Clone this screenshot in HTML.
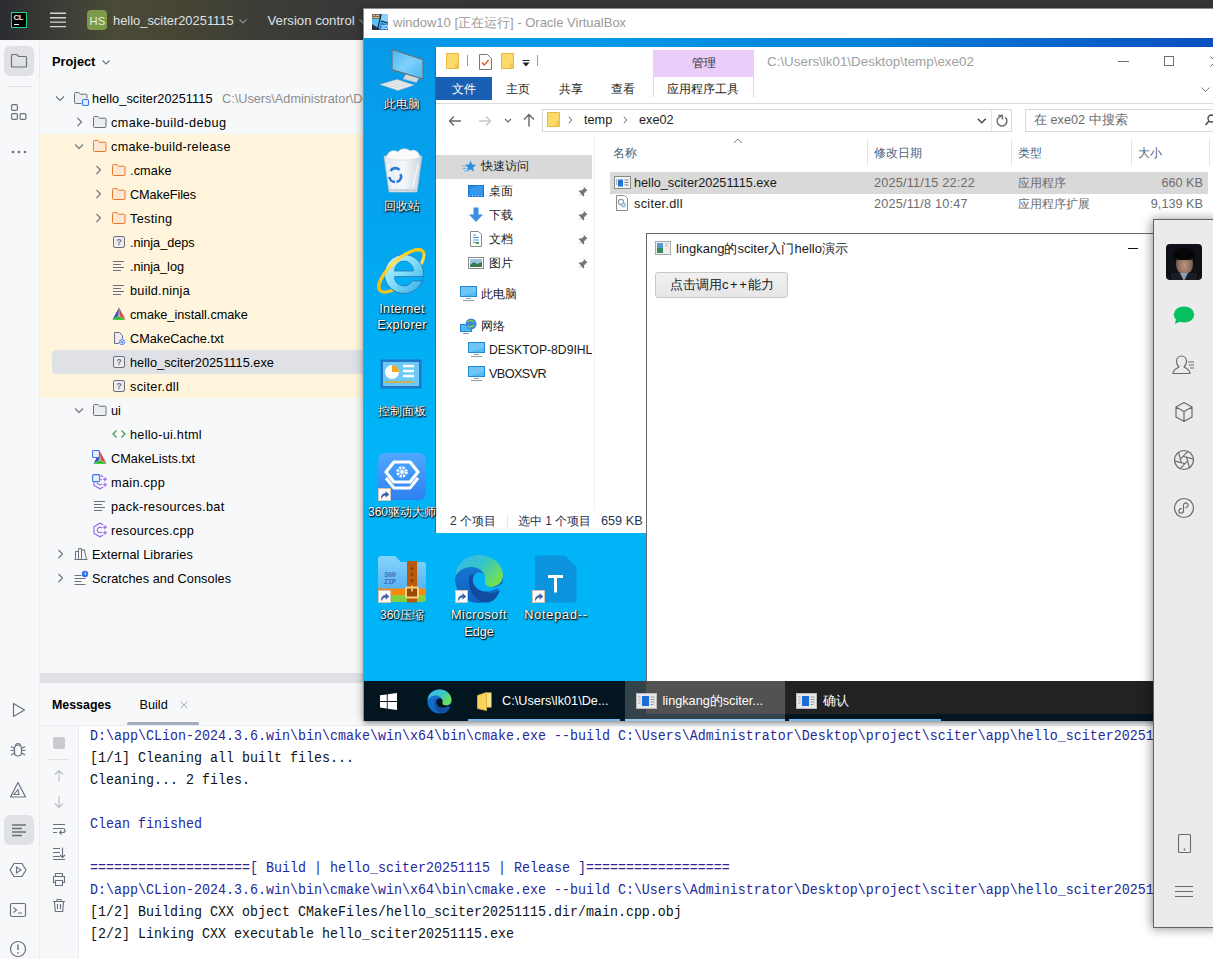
<!DOCTYPE html>
<html><head><meta charset="utf-8">
<style>
*{box-sizing:border-box;margin:0;padding:0}
html,body{width:1213px;height:959px;overflow:hidden;background:#f7f8fa;font-family:"Liberation Sans",sans-serif;position:relative}
.a{position:absolute;display:block}
.t{position:absolute;white-space:nowrap;line-height:14px}
.tr{font-size:12.7px;color:#000}
.cl{position:absolute;left:90px;font-family:"Liberation Mono",monospace;font-size:13.33px;line-height:22px;white-space:pre;color:#111;transform-origin:0 0;transform:scaleY(1.13)}
.cl.b{color:#27279a}
.w{color:#fff}
</style></head><body>
<div class="a" style="left:0;top:0;width:1213px;height:40px;background:linear-gradient(90deg,#2b2d32 0px,#3b3c35 55px,#4a4a37 115px,#474635 170px,#3d3d37 260px,#383837 340px,#353535 700px)"></div>
<div class="a" style="left:11px;top:12px;width:16px;height:16px;background:#000;border:1px solid #21d789"></div>
<div class="t" style="left:13.5px;top:11px;font-size:7.8px;font-weight:bold;color:#eee;letter-spacing:-0.4px">CL</div>
<div class="a" style="left:14px;top:23.8px;width:5px;height:1.4px;background:#fff"></div>
<svg class="a" style="left:49px;top:11px" width="18" height="18" viewBox="0 0 18 18"><path d="M1 2.25h16M1 6.7h16M1 11.15h16M1 15.6h16" stroke="#d5d5d5" stroke-width="1.4"/></svg>
<div class="a" style="left:87px;top:10px;width:20px;height:20px;border-radius:4px;background:#7b9a4a"></div>
<div class="t" style="left:89.5px;top:13.5px;font-size:11.2px;color:#e8eedd;letter-spacing:0.2px">HS</div>
<div class="t" style="left:113px;top:14px;font-size:12.9px;color:#dfe1e5">hello_sciter20251115</div>
<svg class="a" style="left:237px;top:15px" width="12" height="12" viewBox="0 0 12 12"><path d="M2.5 4.5l3.5 3.5 3.5-3.5" fill="none" stroke="#8c8f94" stroke-width="1.1"/></svg>
<div class="t" style="left:267.5px;top:14px;font-size:13.2px;color:#dfe1e5">Version control</div>
<svg class="a" style="left:357px;top:15px" width="12" height="12" viewBox="0 0 12 12"><path d="M2.5 4.5l3.5 3.5 3.5-3.5" fill="none" stroke="#8c8f94" stroke-width="1.1"/></svg>
<div class="a" style="left:0;top:40px;width:40px;height:919px;background:#f7f8fa;border-right:1px solid #ebecf0"></div>
<div class="a" style="left:4px;top:46px;width:30px;height:30px;border-radius:6px;background:#dfe1e5"></div>
<svg class="a" style="left:9px;top:51px" width="20" height="20" viewBox="0 0 20 20"><path d="M2.5 4.5a1 1 0 0 1 1-1h4.2l2 2h6.8a1 1 0 0 1 1 1v8.5a1 1 0 0 1-1 1h-13a1 1 0 0 1-1-1z" fill="none" stroke="#6c707e" stroke-width="1.2"/></svg>
<div class="a" style="left:7px;top:86px;width:24px;height:1px;background:#dfe1e5"></div>
<svg class="a" style="left:9px;top:104px" width="20" height="20" viewBox="0 0 20 20"><rect x="2.6" y="0.6" width="5.8" height="5.8" rx="1.2" fill="none" stroke="#6c707e" stroke-width="1.2"/><rect x="2.6" y="9.6" width="5.8" height="5.8" rx="1.2" fill="none" stroke="#6c707e" stroke-width="1.2"/><rect x="11.1" y="9.6" width="5.8" height="5.8" rx="1.2" fill="none" stroke="#6c707e" stroke-width="1.2"/></svg>
<svg class="a" style="left:9px;top:149px" width="20" height="6" viewBox="0 0 20 6"><circle cx="4" cy="3" r="1.3" fill="#6c707e"/><circle cx="10" cy="3" r="1.3" fill="#6c707e"/><circle cx="16" cy="3" r="1.3" fill="#6c707e"/></svg>
<svg class="a" style="left:8px;top:700px" width="20" height="20" viewBox="0 0 20 20"><path d="M5.5 3.5v13l11-6.5z" fill="none" stroke="#6c707e" stroke-width="1.2" stroke-linejoin="round"/></svg>
<svg class="a" style="left:8px;top:740px" width="20" height="20" viewBox="0 0 20 20"><path d="M6.5 8.5a3.5 3.5 0 0 1 7 0v4a3.5 3.5 0 0 1-7 0z" fill="none" stroke="#6c707e" stroke-width="1.2"/><path d="M7.5 6a2.5 2.5 0 0 1 5 0" fill="none" stroke="#6c707e" stroke-width="1.2"/><path d="M2.5 10.5h4M13.5 10.5h4M3 6.5l3.5 2M17 6.5l-3.5 2M3 15l3.5-2M17 15l-3.5-2" stroke="#6c707e" stroke-width="1.2"/></svg>
<svg class="a" style="left:8px;top:780px" width="20" height="20" viewBox="0 0 20 20"><path d="M10 2.5L2.5 17h15z" fill="none" stroke="#6c707e" stroke-width="1.2" stroke-linejoin="round"/><path d="M10 9.5l-4 5h5z" fill="none" stroke="#6c707e" stroke-width="1.1"/></svg>
<div class="a" style="left:4px;top:815px;width:30px;height:30px;border-radius:6px;background:#dfe1e5"></div>
<svg class="a" style="left:9px;top:820px" width="20" height="20" viewBox="0 0 20 20"><path d="M3 5h14M3 8.5h10M3 12h14M3 15.5h10" stroke="#6c707e" stroke-width="1.3"/></svg>
<svg class="a" style="left:8px;top:860px" width="20" height="20" viewBox="0 0 20 20"><path d="M6 3.5h8l4 6.5-4 6.5h-8l-4-6.5z" fill="none" stroke="#6c707e" stroke-width="1.2" stroke-linejoin="round"/><path d="M8.5 7v6l4.5-3z" fill="none" stroke="#6c707e" stroke-width="1.1"/></svg>
<svg class="a" style="left:8px;top:900px" width="20" height="20" viewBox="0 0 20 20"><rect x="2.5" y="3.5" width="15" height="13" rx="1.5" fill="none" stroke="#6c707e" stroke-width="1.2"/><path d="M5.5 7.5l3 2.5-3 2.5M10 13h4" fill="none" stroke="#6c707e" stroke-width="1.2"/></svg>
<svg class="a" style="left:8px;top:939px" width="20" height="20" viewBox="0 0 20 20"><circle cx="10" cy="10" r="7.5" fill="none" stroke="#6c707e" stroke-width="1.2"/><path d="M10 5.5v5.5" stroke="#6c707e" stroke-width="1.4"/><circle cx="10" cy="13.8" r="0.9" fill="#6c707e"/></svg>
<div class="t" style="left:52px;top:55px;font-size:12.8px;font-weight:bold;color:#000">Project</div>
<svg class="a" style="left:100px;top:56px" width="12" height="12" viewBox="0 0 12 12"><path d="M2.5 4.5l3.5 3.5 3.5-3.5" fill="none" stroke="#6c707e" stroke-width="1.1"/></svg>
<div class="a" style="left:40px;top:134px;width:1173px;height:264px;background:#fef5dc"></div>
<div class="a" style="left:52px;top:350px;width:1161px;height:24px;border-radius:4px;background:#dfe1e6"></div>
<svg class="a" style="left:52px;top:90px" width="16" height="16" viewBox="0 0 16 16"><path d="M4 6.5l4 4 4-4" fill="none" stroke="#6c707e" stroke-width="1.1"/></svg>
<svg class="a" style="left:73px;top:90px" width="18" height="18" viewBox="0 0 18 18"><path d="M1.5 3.5a1 1 0 0 1 1-1h3.3l1.7 1.7h5.5a1 1 0 0 1 1 1v7.3a1 1 0 0 1-1 1h-10.5a1 1 0 0 1-1-1z" fill="#ebecf0" stroke="#6c707e" stroke-width="1"/><rect x="8.5" y="8.5" width="8" height="8" rx="1.5" fill="#f7f8fa"/><rect x="9.5" y="9.5" width="6" height="6" rx="1.2" fill="#e7effd" stroke="#3574f0" stroke-width="1.1"/></svg>
<div class="t tr" style="left:92px;top:92px;letter-spacing:0.09px">hello_sciter20251115</div>
<svg class="a" style="left:71px;top:114px" width="16" height="16" viewBox="0 0 16 16"><path d="M6.5 4l4 4-4 4" fill="none" stroke="#6c707e" stroke-width="1.1"/></svg>
<svg class="a" style="left:92px;top:114px" width="16" height="16" viewBox="0 0 16 16"><path d="M1.5 3.5a1 1 0 0 1 1-1h3.3l1.7 1.7h5.5a1 1 0 0 1 1 1v7.3a1 1 0 0 1-1 1h-10.5a1 1 0 0 1-1-1z" fill="#ebecf0" stroke="#6c707e" stroke-width="1"/></svg>
<div class="t tr" style="left:111px;top:116px;letter-spacing:0.45px">cmake-build-debug</div>
<svg class="a" style="left:71px;top:138px" width="16" height="16" viewBox="0 0 16 16"><path d="M4 6.5l4 4 4-4" fill="none" stroke="#6c707e" stroke-width="1.1"/></svg>
<svg class="a" style="left:92px;top:138px" width="16" height="16" viewBox="0 0 16 16"><path d="M1.5 3.5a1 1 0 0 1 1-1h3.3l1.7 1.7h5.5a1 1 0 0 1 1 1v7.3a1 1 0 0 1-1 1h-10.5a1 1 0 0 1-1-1z" fill="#fde6d3" stroke="#e57b2e" stroke-width="1"/></svg>
<div class="t tr" style="left:111px;top:140px;letter-spacing:0.29px">cmake-build-release</div>
<svg class="a" style="left:90px;top:162px" width="16" height="16" viewBox="0 0 16 16"><path d="M6.5 4l4 4-4 4" fill="none" stroke="#6c707e" stroke-width="1.1"/></svg>
<svg class="a" style="left:111px;top:162px" width="16" height="16" viewBox="0 0 16 16"><path d="M1.5 3.5a1 1 0 0 1 1-1h3.3l1.7 1.7h5.5a1 1 0 0 1 1 1v7.3a1 1 0 0 1-1 1h-10.5a1 1 0 0 1-1-1z" fill="#fde6d3" stroke="#e57b2e" stroke-width="1"/></svg>
<div class="t tr" style="left:130px;top:164px;letter-spacing:0.12px">.cmake</div>
<svg class="a" style="left:90px;top:186px" width="16" height="16" viewBox="0 0 16 16"><path d="M6.5 4l4 4-4 4" fill="none" stroke="#6c707e" stroke-width="1.1"/></svg>
<svg class="a" style="left:111px;top:186px" width="16" height="16" viewBox="0 0 16 16"><path d="M1.5 3.5a1 1 0 0 1 1-1h3.3l1.7 1.7h5.5a1 1 0 0 1 1 1v7.3a1 1 0 0 1-1 1h-10.5a1 1 0 0 1-1-1z" fill="#fde6d3" stroke="#e57b2e" stroke-width="1"/></svg>
<div class="t tr" style="left:130px;top:188px;letter-spacing:-0.09px">CMakeFiles</div>
<svg class="a" style="left:90px;top:210px" width="16" height="16" viewBox="0 0 16 16"><path d="M6.5 4l4 4-4 4" fill="none" stroke="#6c707e" stroke-width="1.1"/></svg>
<svg class="a" style="left:111px;top:210px" width="16" height="16" viewBox="0 0 16 16"><path d="M1.5 3.5a1 1 0 0 1 1-1h3.3l1.7 1.7h5.5a1 1 0 0 1 1 1v7.3a1 1 0 0 1-1 1h-10.5a1 1 0 0 1-1-1z" fill="#fde6d3" stroke="#e57b2e" stroke-width="1"/></svg>
<div class="t tr" style="left:130px;top:212px;letter-spacing:0.33px">Testing</div>
<svg class="a" style="left:111px;top:234px" width="16" height="16" viewBox="0 0 16 16"><rect x="2.5" y="2.5" width="11" height="11" rx="1.5" fill="#ebecf0" stroke="#6c707e"/><text x="8" y="11.3" font-size="9" font-weight="bold" text-anchor="middle" fill="#6c707e" font-family="Liberation Sans">?</text></svg>
<div class="t tr" style="left:130px;top:236px;letter-spacing:-0.03px">.ninja_deps</div>
<svg class="a" style="left:111px;top:258px" width="16" height="16" viewBox="0 0 16 16"><path d="M2 3.5h11M2 6.5h8M2 9.5h11M2 12.5h8" stroke="#6c707e" stroke-width="1"/></svg>
<div class="t tr" style="left:130px;top:260px;letter-spacing:-0.04px">.ninja_log</div>
<svg class="a" style="left:111px;top:282px" width="16" height="16" viewBox="0 0 16 16"><path d="M2 3.5h11M2 6.5h8M2 9.5h11M2 12.5h8" stroke="#6c707e" stroke-width="1"/></svg>
<div class="t tr" style="left:130px;top:284px;letter-spacing:0.26px">build.ninja</div>
<svg class="a" style="left:111px;top:306px" width="16" height="16" viewBox="0 0 16 16"><path d="M8 1.5L1.5 14h13z" fill="#d6d6d6"/><path d="M8 1.5L1.6 13.5 7.2 10z" fill="#3b4fc4"/><path d="M8 1.5L14.4 13.5 8.6 10z" fill="#db4648"/><path d="M1.6 13.8L7.5 10.2 14.4 13.8z" fill="#22c21f"/></svg>
<div class="t tr" style="left:130px;top:308px;letter-spacing:0.0px">cmake_install.cmake</div>
<svg class="a" style="left:111px;top:330px" width="16" height="16" viewBox="0 0 16 16"><path d="M3.5 2.5h5l3 3v8h-8z" fill="#ebecf0" stroke="#6c707e"/><circle cx="11" cy="12" r="3.3" fill="#f7f8fa"/><circle cx="11" cy="12" r="2.4" fill="none" stroke="#3574f0" stroke-width="1.4" stroke-dasharray="1.3 0.6"/><circle cx="11" cy="12" r="0.9" fill="#3574f0"/></svg>
<div class="t tr" style="left:130px;top:332px;letter-spacing:0.0px">CMakeCache.txt</div>
<svg class="a" style="left:111px;top:354px" width="16" height="16" viewBox="0 0 16 16"><rect x="2.5" y="2.5" width="11" height="11" rx="1.5" fill="#ebecf0" stroke="#6c707e"/><text x="8" y="11.3" font-size="9" font-weight="bold" text-anchor="middle" fill="#6c707e" font-family="Liberation Sans">?</text></svg>
<div class="t tr" style="left:130px;top:356px;letter-spacing:0.05px">hello_sciter20251115.exe</div>
<svg class="a" style="left:111px;top:378px" width="16" height="16" viewBox="0 0 16 16"><rect x="2.5" y="2.5" width="11" height="11" rx="1.5" fill="#ebecf0" stroke="#6c707e"/><text x="8" y="11.3" font-size="9" font-weight="bold" text-anchor="middle" fill="#6c707e" font-family="Liberation Sans">?</text></svg>
<div class="t tr" style="left:130px;top:380px;letter-spacing:0.32px">sciter.dll</div>
<svg class="a" style="left:71px;top:402px" width="16" height="16" viewBox="0 0 16 16"><path d="M4 6.5l4 4 4-4" fill="none" stroke="#6c707e" stroke-width="1.1"/></svg>
<svg class="a" style="left:92px;top:402px" width="16" height="16" viewBox="0 0 16 16"><path d="M1.5 3.5a1 1 0 0 1 1-1h3.3l1.7 1.7h5.5a1 1 0 0 1 1 1v7.3a1 1 0 0 1-1 1h-10.5a1 1 0 0 1-1-1z" fill="#ebecf0" stroke="#6c707e" stroke-width="1"/></svg>
<div class="t tr" style="left:111px;top:404px;letter-spacing:0px">ui</div>
<svg class="a" style="left:111px;top:426px" width="16" height="16" viewBox="0 0 16 16"><path d="M5.5 4.5l-3.5 3.5 3.5 3.5M10.5 4.5l3.5 3.5-3.5 3.5" fill="none" stroke="#3a9c4a" stroke-width="1.2"/></svg>
<div class="t tr" style="left:130px;top:428px;letter-spacing:0.27px">hello-ui.html</div>
<svg class="a" style="left:92px;top:450px" width="16" height="16" viewBox="0 0 16 16"><path d="M8 1.5L1.5 14h13z" fill="#d6d6d6"/><path d="M8 1.5L1.6 13.5 7.2 10z" fill="#3b4fc4"/><path d="M8 1.5L14.4 13.5 8.6 10z" fill="#db4648"/><path d="M1.6 13.8L7.5 10.2 14.4 13.8z" fill="#22c21f"/><rect x="0.5" y="0.5" width="7" height="7" rx="1.2" fill="#e7effd" stroke="#3574f0" stroke-width="1.1"/></svg>
<div class="t tr" style="left:111px;top:452px;letter-spacing:0.07px">CMakeLists.txt</div>
<svg class="a" style="left:92px;top:474px" width="16" height="16" viewBox="0 0 16 16"><path d="M11.2 2.8L8 1.2 2 4.6v6.8L8 14.8l3.2-1.8" fill="none" stroke="#8f5ff0" stroke-width="1.1"/><path d="M9.9 6.1a2.7 2.7 0 1 0 0 3.8" fill="none" stroke="#8f5ff0" stroke-width="1.1"/><path d="M11 5.2h4M13 3.2v4M11 10.8h4M13 8.8v4" stroke="#8f5ff0" stroke-width="1.1"/><rect x="0" y="0" width="8.5" height="8.5" rx="1.5" fill="#f7f8fa"/><rect x="0.6" y="0.6" width="7" height="7" rx="1.2" fill="#e7effd" stroke="#3574f0" stroke-width="1.1"/></svg>
<div class="t tr" style="left:111px;top:476px;letter-spacing:0.32px">main.cpp</div>
<svg class="a" style="left:92px;top:498px" width="16" height="16" viewBox="0 0 16 16"><path d="M2 3.5h11M2 6.5h8M2 9.5h11M2 12.5h8" stroke="#6c707e" stroke-width="1"/></svg>
<div class="t tr" style="left:111px;top:500px;letter-spacing:0.31px">pack-resources.bat</div>
<svg class="a" style="left:92px;top:522px" width="16" height="16" viewBox="0 0 16 16"><path d="M11.2 2.8L8 1.2 2 4.6v6.8L8 14.8l3.2-1.8" fill="none" stroke="#8f5ff0" stroke-width="1.1"/><path d="M9.9 6.1a2.7 2.7 0 1 0 0 3.8" fill="none" stroke="#8f5ff0" stroke-width="1.1"/><path d="M11 5.2h4M13 3.2v4M11 10.8h4M13 8.8v4" stroke="#8f5ff0" stroke-width="1.1"/></svg>
<div class="t tr" style="left:111px;top:524px;letter-spacing:0.26px">resources.cpp</div>
<svg class="a" style="left:52px;top:546px" width="16" height="16" viewBox="0 0 16 16"><path d="M6.5 4l4 4-4 4" fill="none" stroke="#6c707e" stroke-width="1.1"/></svg>
<svg class="a" style="left:73px;top:546px" width="16" height="16" viewBox="0 0 16 16"><path d="M2.5 13.5v-8h3v8M5.5 13.5v-11h3v11M8.5 13.5v-9l2.8-.8 2.2 9.8M1.5 13.5h13" fill="none" stroke="#6c707e"/></svg>
<div class="t tr" style="left:92px;top:548px;letter-spacing:0.12px">External Libraries</div>
<svg class="a" style="left:52px;top:570px" width="16" height="16" viewBox="0 0 16 16"><path d="M6.5 4l4 4-4 4" fill="none" stroke="#6c707e" stroke-width="1.1"/></svg>
<svg class="a" style="left:73px;top:570px" width="16" height="16" viewBox="0 0 16 16"><path d="M1.5 5.5h7M1.5 8.5h11M1.5 11.5h7M1.5 14.5h11" stroke="#6c707e"/><circle cx="12" cy="4" r="3.2" fill="#3574f0"/><path d="M12 2.4v1.8h1.2" stroke="#fff" stroke-width="0.8" fill="none"/></svg>
<div class="t tr" style="left:92px;top:572px;letter-spacing:0.07px">Scratches and Consoles</div>
<div class="t tr" style="left:222px;top:92px;color:#8c8c8c">C:\Users\Administrator\Desktop\project\sciter\app\hello_sciter20251115</div>
<div class="a" style="left:40px;top:673px;width:1173px;height:10px;background:#dfe1e4"></div>
<div class="t" style="left:52px;top:698px;font-size:12.4px;font-weight:bold;color:#000">Messages</div>
<div class="t" style="left:139.5px;top:698px;font-size:12.7px;color:#000">Build</div>
<svg class="a" style="left:179px;top:700px" width="10" height="10" viewBox="0 0 10 10"><path d="M1.5 1.5l7 7M8.5 1.5l-7 7" stroke="#a8adbd" stroke-width="1"/></svg>
<div class="a" style="left:127px;top:722px;width:72px;height:3px;border-radius:2px;background:#a3abbd"></div>
<div class="a" style="left:40px;top:725px;width:1173px;height:1px;background:#ebecf0"></div>
<div class="a" style="left:78px;top:726px;width:1px;height:233px;background:#ebecf0"></div>
<div class="a" style="left:53px;top:737px;width:12px;height:12px;border-radius:2px;background:#c9cbd0"></div>
<div class="a" style="left:49px;top:759px;width:20px;height:1px;background:#dfe1e5"></div>
<svg class="a" style="left:51px;top:768px" width="16" height="16" viewBox="0 0 16 16"><path d="M8 2.5v11M4 6.5l4-4 4 4" fill="none" stroke="#b8bbc3" stroke-width="1.1"/></svg>
<svg class="a" style="left:51px;top:794px" width="16" height="16" viewBox="0 0 16 16"><path d="M8 2.5v11M4 9.5l4 4 4-4" fill="none" stroke="#b8bbc3" stroke-width="1.1"/></svg>
<svg class="a" style="left:51px;top:820px" width="16" height="16" viewBox="0 0 16 16"><path d="M2 4.5h12M2 8.5h10a2 2 0 0 1 0 4h-3M10.5 10.5l-2 2 2 2M2 12.5h4" fill="none" stroke="#6c707e" stroke-width="1.1"/></svg>
<svg class="a" style="left:51px;top:845px" width="16" height="16" viewBox="0 0 16 16"><path d="M2 3.5h7M2 7.5h7M2 11.5h7M2 14.5h12M11.5 2.5v10M9 10l2.5 2.5L14 10" fill="none" stroke="#6c707e" stroke-width="1.1"/></svg>
<svg class="a" style="left:51px;top:871px" width="16" height="16" viewBox="0 0 16 16"><path d="M4.5 5.5v-3h7v3M2.5 5.5h11v6h-2M4.5 11.5h-2v-6M4.5 9.5h7v5h-7z" fill="none" stroke="#6c707e" stroke-width="1.1"/></svg>
<svg class="a" style="left:51px;top:897px" width="16" height="16" viewBox="0 0 16 16"><path d="M2 4.5h12M6 4.5v-2h4v2M3.5 4.5l.8 10h7.4l.8-10M6.5 7v5M9.5 7v5" fill="none" stroke="#6c707e" stroke-width="1.1"/></svg>
<div class="a" style="left:79px;top:726px;width:1134px;height:233px;background:#fff"></div>
<div class="cl b" style="top:724px">D:\app\CLion-2024.3.6.win\bin\cmake\win\x64\bin\cmake.exe --build C:\Users\Administrator\Desktop\project\sciter\app\hello_sciter20251115\cmake-build-release --target clean -j 6</div>
<div class="cl k" style="top:746px">[1/1] Cleaning all built files...</div>
<div class="cl k" style="top:768px">Cleaning... 2 files.</div>
<div class="cl b" style="top:812px">Clean finished</div>
<div class="cl b" style="top:856px">====================[ Build | hello_sciter20251115 | Release ]==================</div>
<div class="cl b" style="top:878px">D:\app\CLion-2024.3.6.win\bin\cmake\win\x64\bin\cmake.exe --build C:\Users\Administrator\Desktop\project\sciter\app\hello_sciter20251115\cmake-build-release --target hello_sciter20251115 -j 6</div>
<div class="cl k" style="top:900px">[1/2] Building CXX object CMakeFiles/hello_sciter20251115.dir/main.cpp.obj</div>
<div class="cl k" style="top:922px">[2/2] Linking CXX executable hello_sciter20251115.exe</div>
<div class="a" style="left:363px;top:8px;width:860px;height:713px;background:#fff;box-shadow:0 3px 5px -1px rgba(0,0,0,.4),-3px 0 9px rgba(0,0,0,.13)"></div>
<div class="a" style="left:363px;top:8px;width:1px;height:713px;background:#8c8c8c"></div>
<div class="a" style="left:363px;top:8px;width:850px;height:1px;background:#8c8c8c"></div>
<svg class="a" style="left:372px;top:14px" width="16" height="16" viewBox="0 0 16 16"><rect width="16" height="16" fill="#4fb0ec"/><path d="M9 0H16V9L9 6z" fill="#8ad2f8"/><path d="M0 5H9L6 16H0z" fill="#5cc0f4"/><path d="M0 10L9 16H0z" fill="#2a3345"/><path d="M9 9L16 11V16H7z" fill="#2a7ad0"/><rect width="9" height="5" fill="#7a6a58"/><path d="M1 1.5h2M4 1.5h3M1 3.5h6" stroke="#d8c8a0" stroke-width=".9"/><path d="M9.3 0L5.3 16M9 7L16 9" stroke="#0c2448" stroke-width="1.1"/><text x="8.8" y="14.6" font-size="5.6" font-weight="bold" fill="#eef" font-family="Liberation Sans">3D</text></svg>
<div class="t" style="left:393px;top:16px;font-size:13px;color:#9a9a9a;">window10 [正在运行] - Oracle VirtualBox</div>
<div class="a" style="left:364px;top:38px;width:849px;height:643px;background:linear-gradient(180deg,#0799e8 0,#04a2ee 150px,#01aef4 300px,#00b4f7 400px,#00b4f7 100%)"></div>
<div class="a" style="left:364px;top:38px;width:849px;height:9px;background:linear-gradient(90deg,#0799e8 0%,#0598e8 28%,#0780d8 60%,#0a4fc0 100%)"></div>
<div class="a" style="left:435px;top:47px;width:778px;height:486px;background:#fff;border-left:1px solid #2a6d96"></div>
<svg class="a" style="left:446px;top:53px" width="13" height="16" viewBox="0 0 13 16"><path d="M0.5 0.5h12v15h-12z" fill="#fcd96b" stroke="#e8b93c"/><path d="M9 10h3v5h-3z" fill="#f2c84d"/></svg>
<div class="a" style="left:467px;top:55px;width:1px;height:11px;background:#9a9a9a"></div>
<svg class="a" style="left:479px;top:54px" width="13" height="16" viewBox="0 0 13 16"><path d="M0.5 0.5h8l4 4v11h-12z" fill="#fff" stroke="#777"/><path d="M3 8.5l2.3 2.5 4.3-5" fill="none" stroke="#e0502a" stroke-width="1.3"/></svg>
<svg class="a" style="left:501px;top:53px" width="13" height="16" viewBox="0 0 13 16"><path d="M0.5 0.5h12v15h-12z" fill="#fcd96b" stroke="#e8b93c"/><path d="M9 10h3v5h-3z" fill="#f2c84d"/></svg>
<svg class="a" style="left:522px;top:60px" width="8" height="7" viewBox="0 0 8 7"><path d="M0.5 0.5h7" stroke="#222"/><path d="M0.5 2.5h7l-3.5 4z" fill="#222"/></svg>
<div class="a" style="left:537px;top:55px;width:1px;height:11px;background:#9a9a9a"></div>
<div class="a" style="left:653px;top:50px;width:101px;height:27px;background:#ebcdfb"></div>
<div class="t" style="left:692px;top:56px;font-size:12px;color:#333;">管理</div>
<div class="a" style="left:653px;top:77px;width:1px;height:20px;background:#dadada"></div>
<div class="a" style="left:753px;top:77px;width:1px;height:20px;background:#dadada"></div>
<div class="t" style="left:767px;top:55px;font-size:13.4px;color:#a0a0a0;">C:\Users\lk01\Desktop\temp\exe02</div>
<div class="a" style="left:1118px;top:61px;width:11px;height:1px;background:#707070"></div>
<div class="a" style="left:1164px;top:56px;width:10px;height:10px;border:1px solid #707070"></div>
<svg class="a" style="left:1210px;top:56px" width="6" height="12" viewBox="0 0 6 12"><path d="M0.5 0.5l10 10M10.5 0.5l-10 10" stroke="#666" stroke-width="1"/></svg>
<div class="a" style="left:436px;top:77px;width:56px;height:23px;background:#1960b3"></div>
<div class="t" style="left:452px;top:82px;font-size:12px;color:#fff;">文件</div>
<div class="t" style="left:506px;top:82px;font-size:12px;color:#222;">主页</div>
<div class="t" style="left:559px;top:82px;font-size:12px;color:#222;">共享</div>
<div class="t" style="left:611px;top:82px;font-size:12px;color:#222;">查看</div>
<div class="t" style="left:667px;top:82px;font-size:12px;color:#222;">应用程序工具</div>
<svg class="a" style="left:1201px;top:87px" width="10" height="6" viewBox="0 0 10 6"><path d="M0.5 0.5l4 4 4-4" fill="none" stroke="#777"/></svg>
<div class="a" style="left:436px;top:103px;width:777px;height:1px;background:#dadbdc"></div>
<svg class="a" style="left:448px;top:115px" width="14" height="12" viewBox="0 0 14 12"><path d="M13 6H1.5M6 1.5L1.5 6 6 10.5" fill="none" stroke="#666" stroke-width="1.3"/></svg>
<svg class="a" style="left:478px;top:115px" width="14" height="12" viewBox="0 0 14 12"><path d="M1 6h11.5M8 1.5l4.5 4.5L8 10.5" fill="none" stroke="#c8c8c8" stroke-width="1.3"/></svg>
<svg class="a" style="left:504px;top:118px" width="8" height="6" viewBox="0 0 8 6"><path d="M1 1l3 3 3-3" fill="none" stroke="#666" stroke-width="1.2"/></svg>
<svg class="a" style="left:523px;top:113px" width="12" height="14" viewBox="0 0 12 14"><path d="M6 13.5V1.5M1 6.5l5-5 5 5" fill="none" stroke="#666" stroke-width="1.4"/></svg>
<div class="a" style="left:542px;top:109px;width:470px;height:23px;border:1px solid #d9d9d9"></div>
<div class="a" style="left:991px;top:110px;width:1px;height:21px;background:#e5e5e5"></div>
<svg class="a" style="left:547px;top:112px" width="13" height="15" viewBox="0 0 13 15"><path d="M0.5 0.5h12v14h-12z" fill="#fcd96b" stroke="#e8b93c"/><path d="M9 9h3v5h-3z" fill="#f2c84d"/></svg>
<svg class="a" style="left:568px;top:116px" width="5" height="8" viewBox="0 0 5 8"><path d="M0.8 0.8l3 3.2-3 3.2" fill="none" stroke="#666"/></svg>
<div class="t" style="left:584px;top:113px;font-size:12.7px;color:#1a1a1a;">temp</div>
<svg class="a" style="left:623px;top:116px" width="5" height="8" viewBox="0 0 5 8"><path d="M0.8 0.8l3 3.2-3 3.2" fill="none" stroke="#666"/></svg>
<div class="t" style="left:639px;top:113px;font-size:12.7px;color:#1a1a1a;">exe02</div>
<svg class="a" style="left:977px;top:118px" width="10" height="6" viewBox="0 0 10 6"><path d="M0.8 0.8l4 4 4-4" fill="none" stroke="#444" stroke-width="1.3"/></svg>
<svg class="a" style="left:994px;top:110px" width="16" height="18" viewBox="0 0 16 18"><path d="M7.6 6.2A4.9 4.9 0 1 0 11.2 7.4" fill="none" stroke="#707070" stroke-width="1.5"/><path d="M4.3 5.5H8.4V9.4" fill="none" stroke="#707070" stroke-width="1.5"/></svg>
<div class="a" style="left:1025px;top:109px;width:200px;height:23px;border:1px solid #d9d9d9"></div>
<div class="t" style="left:1034px;top:113px;font-size:12.7px;color:#6d6d6d;">在 exe02 中搜索</div>
<svg class="a" style="left:1205px;top:114px" width="10" height="12" viewBox="0 0 10 12"><circle cx="6.5" cy="4.5" r="3.5" fill="none" stroke="#444" stroke-width="1.3"/><path d="M4 7l-3.5 4" stroke="#444" stroke-width="1.5"/></svg>
<div class="a" style="left:436px;top:155px;width:156px;height:24px;background:#d9d9d9"></div>
<div class="a" style="left:594px;top:137px;width:1px;height:372px;background:#f0f0f0"></div>
<svg class="a" style="left:462px;top:160px" width="14" height="13" viewBox="0 0 14 13"><path d="M8.5 0.5l1.6 4 4 .3-3.1 2.6 1 4-3.5-2.2-3.5 2.2 1-4L3 4.8l4-.3z" fill="#2a8be0"/><path d="M0.5 6h4M1 8.5h3.5M2 11h3" stroke="#59aef0" stroke-width="0.9"/></svg>
<div class="t" style="left:481px;top:159px;font-size:12px;color:#1a1a1a;">快速访问</div>
<svg class="a" style="left:468px;top:185px" width="16" height="13" viewBox="0 0 16 13"><rect x="0.5" y="0.5" width="15" height="11" fill="#1f8ae6" stroke="#1a73c6"/><path d="M2 4l6-3.5 7 0v10L2 11z" fill="#4aa8f2" opacity=".45"/><path d="M1 11h14" stroke="#fff" stroke-width="0.8" stroke-dasharray="1 2"/></svg>
<div class="t" style="left:489px;top:184px;font-size:12px;color:#1a1a1a;">桌面</div>
<svg class="a" style="left:577px;top:185px" width="12" height="12" viewBox="0 0 12 12"><path d="M6.5 1.5l4 4-1.2.6-2.3 2.3.3 2-1 1-2.3-2.3L1 12l3-3.5L1.7 6.2l1-1 2 .3L7 3.2z" fill="#777"/></svg>
<svg class="a" style="left:468px;top:207px" width="16" height="16" viewBox="0 0 16 16"><path d="M5.5 0.5h5v7h4.5L8 15 1 7.5h4.5z" fill="#3b8ee0"/></svg>
<div class="t" style="left:489px;top:208px;font-size:12px;color:#1a1a1a;">下载</div>
<svg class="a" style="left:577px;top:209px" width="12" height="12" viewBox="0 0 12 12"><path d="M6.5 1.5l4 4-1.2.6-2.3 2.3.3 2-1 1-2.3-2.3L1 12l3-3.5L1.7 6.2l1-1 2 .3L7 3.2z" fill="#777"/></svg>
<svg class="a" style="left:470px;top:231px" width="12" height="16" viewBox="0 0 12 16"><path d="M0.5 0.5h8l3 3v12h-11z" fill="#fff" stroke="#8a8a8a"/><path d="M3 4h3M3 6.5h6M3 9h6M3 11.5h6" stroke="#3c8ee0" stroke-width="0.9"/><path d="M6 11h3v2H6z" fill="#4a9a5c"/></svg>
<div class="t" style="left:489px;top:232px;font-size:12px;color:#1a1a1a;">文档</div>
<svg class="a" style="left:577px;top:233px" width="12" height="12" viewBox="0 0 12 12"><path d="M6.5 1.5l4 4-1.2.6-2.3 2.3.3 2-1 1-2.3-2.3L1 12l3-3.5L1.7 6.2l1-1 2 .3L7 3.2z" fill="#777"/></svg>
<svg class="a" style="left:468px;top:257px" width="16" height="12" viewBox="0 0 16 12"><rect x="0.5" y="0.5" width="15" height="11" fill="#fff" stroke="#8a8a8a"/><rect x="2" y="2" width="12" height="8" fill="#9ac2de"/><path d="M2 8l4-3 3 2 5-2v5H2z" fill="#3a7a52"/></svg>
<div class="t" style="left:489px;top:256px;font-size:12px;color:#1a1a1a;">图片</div>
<svg class="a" style="left:577px;top:257px" width="12" height="12" viewBox="0 0 12 12"><path d="M6.5 1.5l4 4-1.2.6-2.3 2.3.3 2-1 1-2.3-2.3L1 12l3-3.5L1.7 6.2l1-1 2 .3L7 3.2z" fill="#777"/></svg>
<svg class="a" style="left:460px;top:286px" width="17" height="15" viewBox="0 0 17 15"><rect x="0.5" y="0.5" width="16" height="10" fill="#52b8f4" stroke="#1e8ad6"/><path d="M1 1h15v5L1 10z" fill="#8fd2fa" opacity=".5"/><path d="M6 12.5h5M3 14.5h11" stroke="#8a9aa8" stroke-width="1.2"/></svg>
<div class="t" style="left:481px;top:287px;font-size:12px;color:#1a1a1a;">此电脑</div>
<svg class="a" style="left:460px;top:318px" width="17" height="16" viewBox="0 0 17 16"><rect x="0.5" y="6.5" width="11" height="7" fill="#52b8f4" stroke="#1e8ad6"/><circle cx="11" cy="6" r="5.5" fill="#3a8ad0"/><path d="M7 4c2-2 5-2 7 0M7 8c2 1 5 1 7-1" stroke="#9ad24a" stroke-width="1.2" fill="none"/><path d="M3 15.5h6" stroke="#8a9aa8" stroke-width="1"/></svg>
<div class="t" style="left:481px;top:319px;font-size:12px;color:#1a1a1a;">网络</div>
<svg class="a" style="left:468px;top:342px" width="17" height="15" viewBox="0 0 17 15"><rect x="0.5" y="0.5" width="16" height="10" fill="#52b8f4" stroke="#1e8ad6"/><path d="M1 1h15v5L1 10z" fill="#8fd2fa" opacity=".5"/><path d="M6 12.5h5M3 14.5h11" stroke="#8a9aa8" stroke-width="1.2"/></svg>
<div class="t" style="left:489px;top:343px;font-size:12.2px;color:#1a1a1a;">DESKTOP-8D9IHL</div>
<svg class="a" style="left:468px;top:366px" width="17" height="15" viewBox="0 0 17 15"><rect x="0.5" y="0.5" width="16" height="10" fill="#52b8f4" stroke="#1e8ad6"/><path d="M1 1h15v5L1 10z" fill="#8fd2fa" opacity=".5"/><path d="M6 12.5h5M3 14.5h11" stroke="#8a9aa8" stroke-width="1.2"/></svg>
<div class="t" style="left:489px;top:367px;font-size:12.7px;color:#1a1a1a;letter-spacing:-0.6px">VBOXSVR</div>
<svg class="a" style="left:733px;top:138px" width="10" height="6" viewBox="0 0 10 6"><path d="M0.8 5l4-4 4 4" fill="none" stroke="#777"/></svg>
<div class="t" style="left:613px;top:146px;font-size:12px;color:#4c607a;">名称</div>
<div class="a" style="left:867px;top:139px;width:1px;height:27px;background:#e5e5e5"></div>
<div class="a" style="left:1011px;top:139px;width:1px;height:27px;background:#e5e5e5"></div>
<div class="a" style="left:1131px;top:139px;width:1px;height:27px;background:#e5e5e5"></div>
<div class="a" style="left:1209px;top:139px;width:1px;height:27px;background:#e5e5e5"></div>
<div class="t" style="left:874px;top:146px;font-size:12px;color:#4c607a;">修改日期</div>
<div class="t" style="left:1018px;top:146px;font-size:12px;color:#4c607a;">类型</div>
<div class="t" style="left:1138px;top:146px;font-size:12px;color:#4c607a;">大小</div>
<div class="a" style="left:610px;top:172px;width:598px;height:22px;background:#d9d9d9"></div>
<svg class="a" style="left:614px;top:176px" width="17" height="13" viewBox="0 0 17 13"><rect x="0.5" y="0.5" width="16" height="12" fill="#f4f4f4" stroke="#8a8a8a"/><rect x="4" y="3.5" width="5" height="7" fill="#1f73d6"/><path d="M2 4h1.2M2 6h1.2M2 8h1.2M10.5 4h4M10.5 6.5h4M10.5 9h4" stroke="#777"/></svg>
<div class="t" style="left:634px;top:176px;font-size:12.7px;color:#1a1a1a;">hello_sciter20251115.exe</div>
<div class="t" style="left:874px;top:176px;font-size:12.7px;color:#6d6d6d;letter-spacing:0.2px">2025/11/15 22:22</div>
<div class="t" style="left:1018px;top:176px;font-size:12px;color:#6d6d6d;">应用程序</div>
<div class="t" style="left:1100px;top:176px;width:103px;text-align:right;font-size:12.7px;color:#6d6d6d">660 KB</div>
<svg class="a" style="left:616px;top:195px" width="12" height="16" viewBox="0 0 12 16"><path d="M0.5 0.5h8l3 3v12h-11z" fill="#fff" stroke="#8a8a8a"/><circle cx="5" cy="7" r="2.6" fill="none" stroke="#999" stroke-width="1.1"/><circle cx="7.5" cy="10" r="2" fill="#cfe3f5" stroke="#6aa0d0" stroke-width=".9"/></svg>
<div class="t" style="left:634px;top:197px;font-size:12.7px;color:#1a1a1a;letter-spacing:0.3px">sciter.dll</div>
<div class="t" style="left:874px;top:197px;font-size:12.7px;color:#6d6d6d;letter-spacing:0.2px">2025/11/8 10:47</div>
<div class="t" style="left:1018px;top:197px;font-size:12px;color:#6d6d6d;">应用程序扩展</div>
<div class="t" style="left:1100px;top:197px;width:103px;text-align:right;font-size:12.7px;color:#6d6d6d">9,139 KB</div>
<div class="t" style="left:450px;top:514px;font-size:12px;color:#1f3350;">2 个项目</div>
<div class="a" style="left:507px;top:516px;width:1px;height:11px;background:#e5e5e5"></div>
<div class="t" style="left:518px;top:514px;font-size:12px;color:#1f3350;">选中 1 个项目</div>
<div class="t" style="left:601px;top:514px;font-size:12.7px;color:#1f3350;">659 KB</div>
<svg class="a" style="left:370px;top:44px" width="60" height="50" viewBox="0 0 60 50"><defs><linearGradient id="scr" x1="0" y1="0" x2="1" y2="1"><stop offset="0" stop-color="#46b8f6"/><stop offset=".5" stop-color="#7fd0fb"/><stop offset="1" stop-color="#4ab6f4"/></linearGradient></defs><path d="M36 30L49 33.5 46.5 38.5 33 35z" fill="#d5dade" stroke="#aab2ba" stroke-width=".5"/><path d="M22 5.5L53 15.6 53 35 22 25.7z" fill="url(#scr)" stroke="#69737c" stroke-width="1.3"/><path d="M10 40.5L27 35.5 44 41 28 46.5z" fill="#eceff2" stroke="#aeb6be" stroke-width=".6"/><path d="M14 39.3L31 44.8M18 38.1L35 43.6M22 36.9L39 42.4M15 41.5L31 37M19 43L35 38.3M23 44.5L39 39.6" stroke="#c5ccd2" stroke-width=".5"/></svg>
<div class="t" style="left:342px;top:97px;width:120px;text-align:center;font-size:12px;;color:#fff;text-shadow:1px 1px 1px rgba(0,0,0,.95),0 1px 2px rgba(0,0,0,.7),0 0 1px rgba(0,0,0,.6)">此电脑</div>
<svg class="a" style="left:381px;top:147px" width="44" height="48" viewBox="0 0 44 48"><defs><linearGradient id="bin" x1="0" y1="0" x2="1" y2="0"><stop offset="0" stop-color="#dfe8ef"/><stop offset=".5" stop-color="#f6f9fb"/><stop offset="1" stop-color="#c9d6e0"/></linearGradient></defs><path d="M3 9H41L36 45H8z" fill="url(#bin)" stroke="#b4c2cc" stroke-width=".8"/><path d="M5 11C7 4 12 2 17 5 20 1 26 1 29 4 33 2 38 4 39 10 34 14 10 14 5 11z" fill="#fafafa" stroke="#d2d8dd" stroke-width=".7"/><path d="M7 17L12 40M37 17L32 40" stroke="#fff" stroke-width="1.5" opacity=".7"/><path d="M8 43H36" stroke="#c8d2da" stroke-width="2"/><path d="M9.5 24a5.5 5.5 0 0 1 9-1M19.5 27a5.5 5.5 0 0 1-4 8M8.5 30a5.5 5.5 0 0 0 5.5 5" fill="none" stroke="#2a78d6" stroke-width="2.6"/></svg>
<div class="t" style="left:342px;top:199px;width:120px;text-align:center;font-size:12px;;color:#fff;text-shadow:1px 1px 1px rgba(0,0,0,.95),0 1px 2px rgba(0,0,0,.7),0 0 1px rgba(0,0,0,.6)">回收站</div>
<svg class="a" style="left:374px;top:244px" width="56" height="56" viewBox="0 0 56 56"><defs><linearGradient id="ieg" x1="0" y1="0" x2="1" y2="1"><stop offset="0" stop-color="#c4f4fe"/><stop offset=".5" stop-color="#7fdcfa"/><stop offset="1" stop-color="#2fa6e4"/></linearGradient><linearGradient id="ring" x1="0" y1="1" x2="1" y2="0"><stop offset="0" stop-color="#f2b705"/><stop offset=".5" stop-color="#ffe04a"/><stop offset="1" stop-color="#f5c211"/></linearGradient></defs><ellipse cx="27.4" cy="26.9" rx="29" ry="11" transform="rotate(-42.6 27.4 26.9)" fill="none" stroke="url(#ring)" stroke-width="3"/><circle cx="30" cy="30" r="19.5" fill="url(#ieg)" stroke="#2a78b8" stroke-width=".9"/><path d="M20.5 27a9.5 10 0 0 1 19 0z" fill="#03aef3" stroke="#2a78b8" stroke-width=".8"/><path d="M20.5 32.5H49.5L48.6 37H38.5A9.5 9 0 0 1 20.5 32.5z" fill="#03aef3" stroke="#2a78b8" stroke-width=".8"/><path d="M48.7 7.3 L47.1 6.2 L44.9 5.7 L42.2 5.9 L39.0 6.7 L35.4 8.1 L31.6 10.1 L27.7 12.6 L23.8 15.5 L20.0 18.8 L16.4 22.3 L13.1 26.0 L10.3 29.7 L8.0 33.3 L6.3 36.7 L5.2 39.9 L4.8 42.6 L5.1 44.8 L6.1 46.5" fill="none" stroke="url(#ring)" stroke-width="3.2" stroke-linecap="round"/></svg>
<div class="t" style="left:342px;top:302px;width:120px;text-align:center;font-size:12.7px;letter-spacing:0.3px;color:#fff;text-shadow:1px 1px 1px rgba(0,0,0,.95),0 1px 2px rgba(0,0,0,.7),0 0 1px rgba(0,0,0,.6)">Internet</div>
<div class="t" style="left:342px;top:318px;width:120px;text-align:center;font-size:12.7px;letter-spacing:0.3px;color:#fff;text-shadow:1px 1px 1px rgba(0,0,0,.95),0 1px 2px rgba(0,0,0,.7),0 0 1px rgba(0,0,0,.6)">Explorer</div>
<svg class="a" style="left:380px;top:359px" width="42" height="30" viewBox="0 0 42 30"><rect x="0.5" y="0.5" width="41" height="29" fill="#1f77c8"/><rect x="3" y="3" width="36" height="24" fill="#6ccaf4"/><circle cx="12" cy="13" r="7" fill="#fff"/><path d="M12 6a7 7 0 0 1 7 7h-7z" fill="#f4a820"/><path d="M23 7h11M23 12h11M23 17h11" stroke="#fff" stroke-width="2.5"/><path d="M5 23h28" stroke="#f4a820" stroke-width="1.5"/></svg>
<div class="t" style="left:342px;top:404px;width:120px;text-align:center;font-size:12px;;color:#fff;text-shadow:1px 1px 1px rgba(0,0,0,.95),0 1px 2px rgba(0,0,0,.7),0 0 1px rgba(0,0,0,.6)">控制面板</div>
<div class="a" style="left:378px;top:453px;width:48px;height:47px;border-radius:7px;background:linear-gradient(180deg,#4fa8ff,#2d80f0)"></div>
<svg class="a" style="left:384px;top:459px" width="36" height="34" viewBox="0 0 36 34"><path d="M10 3h16l8 10-8 10H10L2 13z" fill="none" stroke="#fff" stroke-width="3.2" stroke-linejoin="round"/><path d="M2 19l8 10h16l8-10" fill="none" stroke="#fff" stroke-width="3" stroke-linejoin="round"/><circle cx="18" cy="13" r="4.2" fill="none" stroke="#fff" stroke-width="3" stroke-dasharray="2.2 1.1"/><circle cx="18" cy="13" r="2" fill="#fff"/></svg>
<svg class="a" style="left:378px;top:488px" width="13" height="13" viewBox="0 0 13 13"><rect x="0.5" y="0.5" width="12" height="12" fill="#fbfbfb" stroke="#d3c3b3"/><path d="M3.2 11.2C2.6 7.8 4.5 5.3 7.6 5V3l3.6 3.4-3.6 3.4V7.6C5.6 7.7 4.2 9 3.2 11.2z" fill="#3a62a8"/></svg>
<div class="t" style="left:342px;top:505px;width:120px;text-align:center;font-size:12px;;color:#fff;text-shadow:1px 1px 1px rgba(0,0,0,.95),0 1px 2px rgba(0,0,0,.7),0 0 1px rgba(0,0,0,.6)">360驱动大师</div>
<svg class="a" style="left:374px;top:550px" width="56" height="56" viewBox="0 0 56 56"><defs><linearGradient id="zipb" x1="0" y1="0" x2="0" y2="1"><stop offset="0" stop-color="#86d4fb"/><stop offset="1" stop-color="#46a6f0"/></linearGradient></defs><path d="M4 9a3 3 0 0 1 3-3h14l6 6h22a3 3 0 0 1 3 3v34a3 3 0 0 1-3 3H7a3 3 0 0 1-3-3z" fill="url(#zipb)"/><path d="M4 38.5h48v7H4z" fill="#fb8a0c"/><path d="M4 45h48v4a3 3 0 0 1-3 3H7a3 3 0 0 1-3-3z" fill="#84d040"/><rect x="33" y="11" width="10" height="41.5" rx="1" fill="#b85a0a"/><circle cx="38" cy="18.5" r="1.3" fill="#7a3a06"/><circle cx="38" cy="24.5" r="1.3" fill="#7a3a06"/><circle cx="38" cy="30.5" r="1.3" fill="#7a3a06"/><rect x="32" y="37.5" width="12" height="10" rx="1.5" fill="#9a4a08" stroke="#fbd27a" stroke-width="2"/><path d="M38 35.5v6" stroke="#fbd27a" stroke-width="1.6"/><text x="10" y="27.3" font-size="7" font-weight="bold" fill="#3a70c0" font-family="Liberation Mono" letter-spacing="-0.3">360</text><text x="10" y="34.3" font-size="7" font-weight="bold" fill="#3a70c0" font-family="Liberation Mono" letter-spacing="-0.3">ZIP</text></svg>
<svg class="a" style="left:378px;top:590px" width="13" height="13" viewBox="0 0 13 13"><rect x="0.5" y="0.5" width="12" height="12" fill="#fbfbfb" stroke="#d3c3b3"/><path d="M3.2 11.2C2.6 7.8 4.5 5.3 7.6 5V3l3.6 3.4-3.6 3.4V7.6C5.6 7.7 4.2 9 3.2 11.2z" fill="#3a62a8"/></svg>
<div class="t" style="left:342px;top:608px;width:120px;text-align:center;font-size:12px;;color:#fff;text-shadow:1px 1px 1px rgba(0,0,0,.95),0 1px 2px rgba(0,0,0,.7),0 0 1px rgba(0,0,0,.6)">360压缩</div>
<svg class="a" style="left:450px;top:550px" width="56" height="56" viewBox="0 0 56 56"><defs><linearGradient id="edt" x1="0" y1="0" x2="1" y2=".6"><stop offset="0" stop-color="#3bb8f0"/><stop offset=".55" stop-color="#35c6c8"/><stop offset="1" stop-color="#70e050"/></linearGradient><linearGradient id="edb" x1="0" y1="0" x2="0" y2="1"><stop offset="0" stop-color="#1a7ad6"/><stop offset="1" stop-color="#0f62c0"/></linearGradient></defs><circle cx="29" cy="29" r="24" fill="url(#edb)"/><path d="M5 28C5.5 13 17 5 29 5 43 5 53 15 53 25 53 33 47 37 40 37 36 37 33.5 35.5 33.5 33.5 33.5 32 35 30.5 35 28 35 22 29 17 21 17 13 17 6.5 22 5 28z" fill="url(#edt)"/><path d="M46 37.5L56 31V50L49.5 41z" fill="#03b0f5"/><path d="M19.5 26C17 38 24 52.5 37 52.5 43 52.5 47.5 47.5 49.5 41 45 43 40 43.5 36 42.5 27 40.5 22 33 24.5 24.5 22.5 24.5 20.5 25 19.5 26z" fill="#124c9e"/><path d="M35 28C35 23.5 31 21.5 27 23 23 24.5 22 29.5 23.5 33.5 25.5 38.5 30.5 41.5 36 41.5 41.5 41.5 46 39.5 49.5 36 45 37.5 40 37.5 36.5 35.5 34.5 34 35 31 35 28z" fill="#03b0f5"/></svg>
<svg class="a" style="left:455px;top:590px" width="13" height="13" viewBox="0 0 13 13"><rect x="0.5" y="0.5" width="12" height="12" fill="#fbfbfb" stroke="#d3c3b3"/><path d="M3.2 11.2C2.6 7.8 4.5 5.3 7.6 5V3l3.6 3.4-3.6 3.4V7.6C5.6 7.7 4.2 9 3.2 11.2z" fill="#3a62a8"/></svg>
<div class="t" style="left:419px;top:608px;width:120px;text-align:center;font-size:12.7px;letter-spacing:0.5px;color:#fff;text-shadow:1px 1px 1px rgba(0,0,0,.95),0 1px 2px rgba(0,0,0,.7),0 0 1px rgba(0,0,0,.6)">Microsoft</div>
<div class="t" style="left:419px;top:625px;width:120px;text-align:center;font-size:12.7px;;color:#fff;text-shadow:1px 1px 1px rgba(0,0,0,.95),0 1px 2px rgba(0,0,0,.7),0 0 1px rgba(0,0,0,.6)">Edge</div>
<svg class="a" style="left:535px;top:555px" width="42" height="48" viewBox="0 0 42 48"><path d="M0 3a2.5 2.5 0 0 1 2.5-2.5H29.5L41.6 12.2V45a2.5 2.5 0 0 1-2.5 2.5H2.5A2.5 2.5 0 0 1 0 45z" fill="#0b93de"/><path d="M13 21.5h15M20.5 21.5v16" stroke="#fff" stroke-width="3"/></svg>
<svg class="a" style="left:532px;top:590px" width="13" height="13" viewBox="0 0 13 13"><rect x="0.5" y="0.5" width="12" height="12" fill="#fbfbfb" stroke="#d3c3b3"/><path d="M3.2 11.2C2.6 7.8 4.5 5.3 7.6 5V3l3.6 3.4-3.6 3.4V7.6C5.6 7.7 4.2 9 3.2 11.2z" fill="#3a62a8"/></svg>
<div class="t" style="left:496px;top:608px;width:120px;text-align:center;font-size:12.7px;letter-spacing:0.8px;color:#fff;text-shadow:1px 1px 1px rgba(0,0,0,.95),0 1px 2px rgba(0,0,0,.7),0 0 1px rgba(0,0,0,.6)">Notepad--</div>
<div class="a" style="left:646px;top:233px;width:507px;height:448px;background:#fff;border-left:1px solid #666;border-top:1px solid #666"></div>
<svg class="a" style="left:655px;top:241px" width="16" height="14" viewBox="0 0 16 14"><rect x="0.5" y="0.5" width="15" height="13" fill="#eee" stroke="#aaa"/><rect x="2" y="2" width="6" height="10" fill="#3a8a5a"/><rect x="2" y="2" width="6" height="5" fill="#5a9ac8"/><path d="M10 3h3M10 5h3" stroke="#bbb"/></svg>
<div class="t" style="left:676px;top:242px;font-size:13px;color:#1a1a1a;">lingkang的sciter入门hello演示</div>
<div class="a" style="left:1128px;top:248px;width:10px;height:1px;background:#111"></div>
<div class="a" style="left:655px;top:272px;width:133px;height:26px;border-radius:3px;border:1px solid #c8c8c8;background:linear-gradient(180deg,#f0f0f0,#e6e6e6)"></div>
<div class="t" style="left:670px;top:278px;font-size:13px;color:#1a1a1a;">点击调用<span style="letter-spacing:1.6px">c++</span>能力</div>
<div class="a" style="left:364px;top:681px;width:849px;height:40px;background:#03151f"></div>
<div class="a" style="left:646px;top:681px;width:567px;height:33px;background:#222"></div>
<div class="a" style="left:625px;top:681px;width:160px;height:40px;background:#33434b"></div>
<div class="a" style="left:646px;top:681px;width:139px;height:33px;background:#525252"></div>
<div class="a" style="left:785px;top:714px;width:428px;height:7px;background:#03151f"></div>
<svg class="a" style="left:380px;top:693px" width="17" height="17" viewBox="0 0 17 17"><path d="M0 2.3l6.8-.9v6.6H0zM7.7 1.3L17 0v8H7.7zM0 8.9h6.8v6.6L0 14.6zM7.7 8.9H17V17l-9.3-1.3z" fill="#fff"/></svg>
<svg class="a" style="left:424.5px;top:686.5px" width="28" height="28" viewBox="0 0 56 56"><circle cx="29" cy="29" r="24" fill="url(#edb)"/><path d="M5 28C5.5 13 17 5 29 5 43 5 53 15 53 25 53 33 47 37 40 37 36 37 33.5 35.5 33.5 33.5 33.5 32 35 30.5 35 28 35 22 29 17 21 17 13 17 6.5 22 5 28z" fill="url(#edt)"/><path d="M46 37.5L56 31V50L49.5 41z" fill="#03151f"/><path d="M19.5 26C17 38 24 52.5 37 52.5 43 52.5 47.5 47.5 49.5 41 45 43 40 43.5 36 42.5 27 40.5 22 33 24.5 24.5 22.5 24.5 20.5 25 19.5 26z" fill="#124c9e"/><path d="M35 28C35 23.5 31 21.5 27 23 23 24.5 22 29.5 23.5 33.5 25.5 38.5 30.5 41.5 36 41.5 41.5 41.5 46 39.5 49.5 36 45 37.5 40 37.5 36.5 35.5 34.5 34 35 31 35 28z" fill="#03151f"/></svg>
<div class="a" style="left:468px;top:719px;width:152px;height:2px;background:#76b9ed"></div>
<svg class="a" style="left:477px;top:692px" width="15" height="19" viewBox="0 0 15 19"><path d="M0.5 3.5l9-3v18l-9-2z" fill="#f8d45c"/><path d="M9.5 0.5h5v15h-5z" fill="#fbe38a"/><path d="M0.5 3.5l9-3v18l-9-2z" fill="none" stroke="#e4b53a" stroke-width=".8"/></svg>
<div class="t" style="left:502px;top:694px;font-size:12.7px;color:#fff;">C:\Users\lk01\De...</div>
<div class="a" style="left:625px;top:719px;width:160px;height:2px;background:#99c9f0"></div>
<svg class="a" style="left:636px;top:693px" width="21" height="16" viewBox="0 0 21 16"><rect x="0.5" y="0.5" width="20" height="15" fill="#e8e8e8" stroke="#bbb"/><rect x="6" y="3" width="7" height="10" fill="#1a6fd6"/><path d="M2.5 4h2M2.5 7h2M2.5 10h2M14.5 4h4M14.5 6.5h4M14.5 9h4M14.5 11.5h3" stroke="#999"/></svg>
<div class="t" style="left:662.5px;top:694px;font-size:12.7px;color:#fff;">lingkang的sciter...</div>
<div class="a" style="left:789px;top:719px;width:152px;height:2px;background:#76b9ed"></div>
<svg class="a" style="left:796px;top:693px" width="21" height="16" viewBox="0 0 21 16"><rect x="0.5" y="0.5" width="20" height="15" fill="#e8e8e8" stroke="#bbb"/><rect x="6" y="3" width="7" height="10" fill="#1a6fd6"/><path d="M2.5 4h2M2.5 7h2M2.5 10h2M14.5 4h4M14.5 6.5h4M14.5 9h4M14.5 11.5h3" stroke="#999"/></svg>
<div class="t" style="left:822.5px;top:694px;font-size:12.7px;color:#fff;">确认</div>
<div class="a" style="left:1153px;top:219px;width:70px;height:709px;background:#ebebeb;border-left:1px solid #626262;border-top:1px solid #626262;border-bottom:1px solid #626262;box-shadow:-4px 0 10px rgba(0,0,0,.18),0 -3px 8px rgba(0,0,0,.12),0 4px 8px rgba(0,0,0,.15)"></div>
<div class="a" style="left:1166px;top:244px;width:36px;height:36px;border-radius:4px;overflow:hidden;background:#0e1116"><div class="a" style="left:10px;top:9px;width:17px;height:21px;border-radius:45%;background:radial-gradient(ellipse at 50% 60%,#b89580 0,#8a6a58 55%,#3a2e28 100%)"></div><div class="a" style="left:7px;top:4px;width:22px;height:12px;border-radius:50% 50% 30% 30%;background:#070707"></div><div class="a" style="left:5px;top:29px;width:26px;height:10px;background:#1a1d24"></div><div class="a" style="left:14px;top:29px;width:8px;height:8px;background:#8aa0b8;clip-path:polygon(0 0,100% 0,50% 100%)"></div></div>
<svg class="a" style="left:1173px;top:306px" width="22" height="19" viewBox="0 0 22 19"><ellipse cx="11" cy="8.5" rx="10.2" ry="8" fill="#07c160"/><path d="M3 13l-1 5 6-3z" fill="#07c160"/></svg>
<svg class="a" style="left:1172px;top:355px" width="24" height="19" viewBox="0 0 24 19"><path d="M1 18.5c0-4 3-5 6-6.5-1.5-1.5-2.5-3-2.5-5.5 0-3 2-5.5 5-5.5s5 2.5 5 5.5c0 2.5-1 4-2.5 5.5 3 1.5 6 2.5 6 6.5z" fill="none" stroke="#6a6a6a" stroke-width="1.2" stroke-linejoin="round"/><path d="M16 7h6M17 10h5M18 13h4" stroke="#6a6a6a" stroke-width="1.2"/></svg>
<svg class="a" style="left:1174px;top:401px" width="20" height="22" viewBox="0 0 20 22"><path d="M10 1.5l8 4.5v10l-8 4.5-8-4.5V6z M2 6l8 4.5 8-4.5 M10 10.5v10" fill="none" stroke="#6a6a6a" stroke-width="1.2" stroke-linejoin="round"/></svg>
<svg class="a" style="left:1173px;top:449px" width="22" height="22" viewBox="0 0 22 22"><circle cx="11" cy="11" r="9.5" fill="none" stroke="#6a6a6a" stroke-width="1.2"/><path d="M14.67 11.98L7.03 19.63M11.98 14.67L1.54 11.87M8.31 13.69L5.51 3.24M7.33 10.02L14.97 2.37M10.02 7.33L20.46 10.13M13.69 8.31L16.49 18.76" fill="none" stroke="#6a6a6a" stroke-width="1.1"/></svg>
<svg class="a" style="left:1173px;top:497px" width="22" height="22" viewBox="0 0 22 22"><circle cx="11" cy="11" r="9.5" fill="none" stroke="#6a6a6a" stroke-width="1.2"/><path d="M8.3 11.6a2.3 2.3 0 1 0 2.2 2.4V8.2a2.3 2.3 0 1 1 2.2 2.3" fill="none" stroke="#6a6a6a" stroke-width="1.2" stroke-linecap="round"/></svg>
<svg class="a" style="left:1177px;top:833px" width="16" height="22" viewBox="0 0 16 22"><rect x="1.5" y="1.5" width="12" height="18" rx="1" fill="none" stroke="#6a6a6a" stroke-width="1.1"/><circle cx="7.5" cy="16.5" r="0.9" fill="#6a6a6a"/></svg>
<svg class="a" style="left:1174px;top:885px" width="20" height="14" viewBox="0 0 20 14"><path d="M1 1.5h18M1 6.5h18M1 11.5h18" stroke="#6a6a6a" stroke-width="1.2"/></svg>
</body></html>
